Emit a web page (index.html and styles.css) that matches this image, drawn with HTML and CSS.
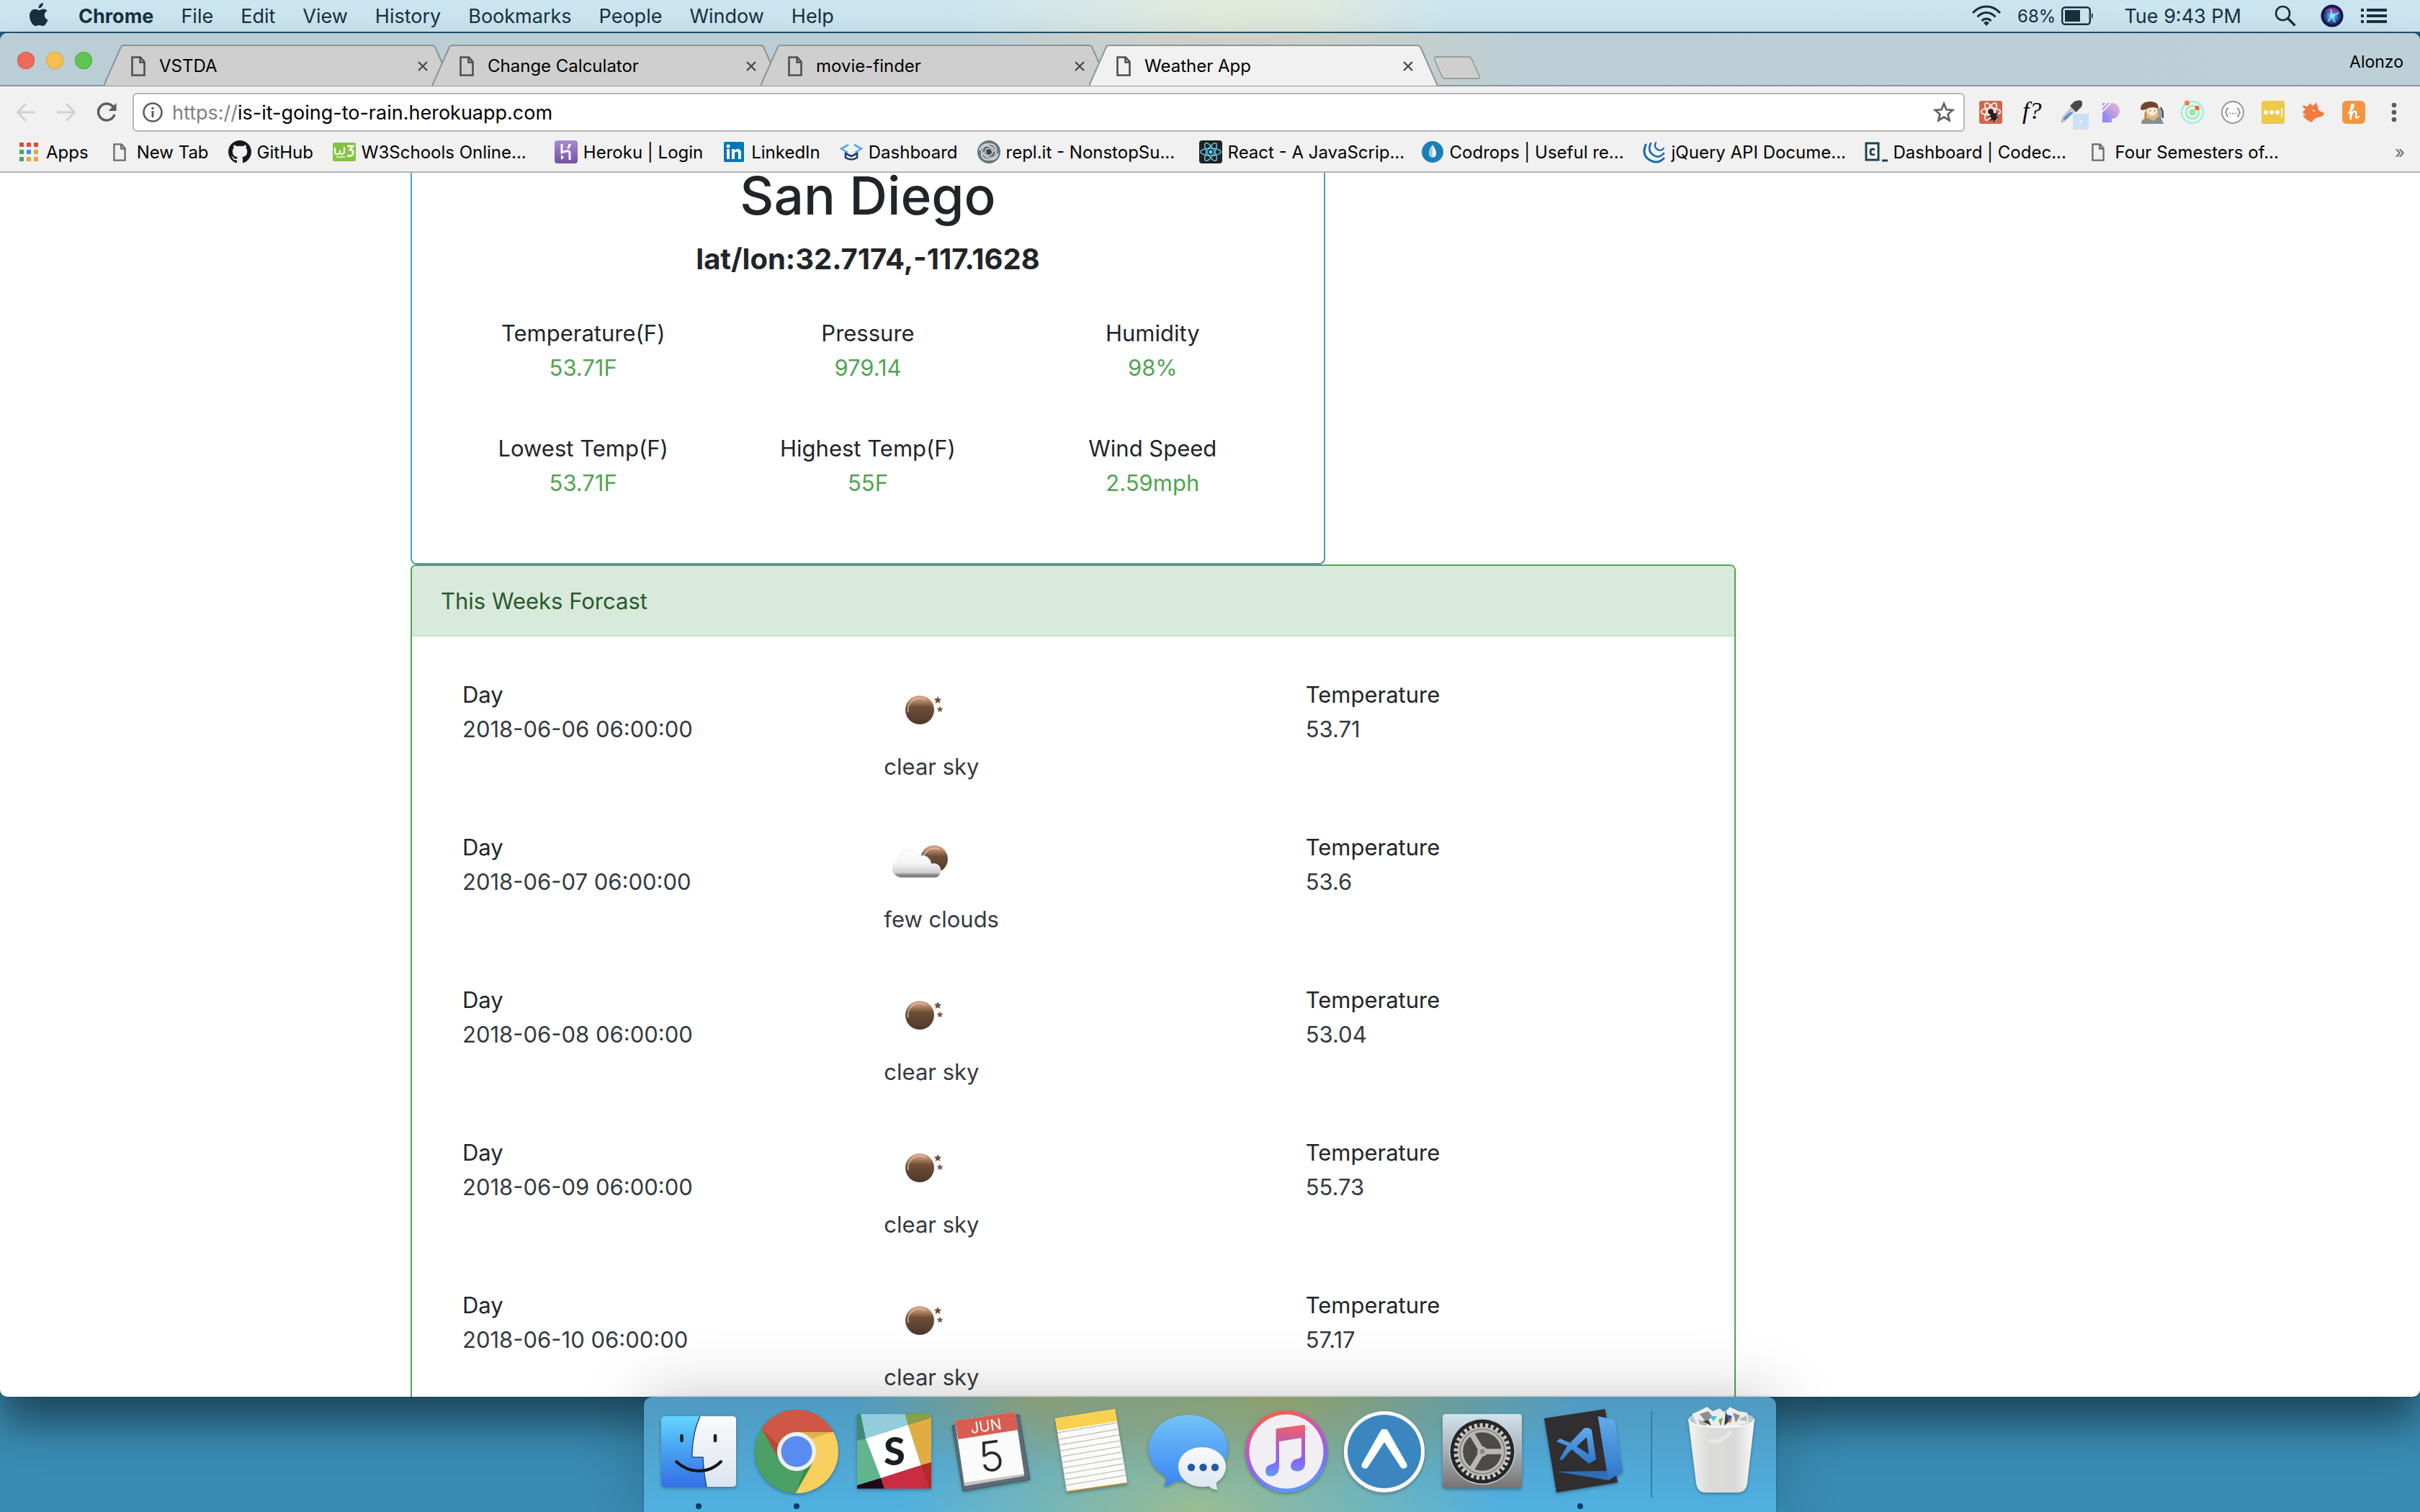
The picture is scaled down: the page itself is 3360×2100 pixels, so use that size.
FILE: index.html
```html
<!DOCTYPE html>
<html lang="en">
<head>
<meta charset="utf-8">
<title>Weather App</title>
<link rel="stylesheet" href="styles.css">
</head>
<body>
<svg class="defs" width="0" height="0" aria-hidden="true">
  <defs>
    <symbol id="page" viewBox="0 0 20 28"><path d="M1.5 1.500H13L18.500 8V26.500H1.500Z M12.500 1.500V8.500H18.500" fill="none" stroke="currentColor" stroke-width="2.600"/></symbol>
    <symbol id="close" viewBox="0 0 14 14"><path d="M1 1L13 13M13 1L1 13" stroke="#4a4a4a" stroke-width="2.400"/></symbol>
    <symbol id="tab-shape" viewBox="0 0 484 58"><path d="M0 57L24 3Q25.500 1 28 1H456Q458.500 1 460 3L484 57Z" fill="currentColor"/><path d="M0 57L24 3Q25.500 1 28 1H456Q458.500 1 460 3L484 57" fill="none" stroke="#8a9599" stroke-width="2"/></symbol>
    <linearGradient id="moon" x1="0" y1="0" x2="0" y2="1"><stop offset="0" stop-color="#dba888"/><stop offset=".18" stop-color="#b98767"/><stop offset=".4" stop-color="#6e4e38"/><stop offset="1" stop-color="#4d382b"/></linearGradient>
    <linearGradient id="cloud" x1="0" y1="0" x2="0" y2="1"><stop offset="0" stop-color="#fff"/><stop offset=".5" stop-color="#f4f4f4"/><stop offset=".82" stop-color="#cfcfcf"/><stop offset=".9" stop-color="#888"/><stop offset="1" stop-color="#777"/></linearGradient>
    <symbol id="clear" viewBox="0 0 100 100"><circle cx="50" cy="45" r="20" fill="url(#moon)"/><path d="M34 48A16 16 0 0 1 58 31" fill="none" stroke="#e3c4b0" stroke-width="1.800" opacity=".8"/><path d="M75 26l1.500 3.500 3.800.3-2.900 2.500.9 3.700-3.300-2-3.300 2 .9-3.700-2.900-2.500 3.800-.3Z" fill="#6b4a38"/><path d="M78 39.500l1.300 3 3.300.3-2.500 2.100.8 3.200-2.900-1.700-2.900 1.700.8-3.200-2.500-2.100 3.300-.3Z" fill="#7b5a48"/></symbol>
    <symbol id="few" viewBox="0 0 100 100"><circle cx="70" cy="40" r="19" fill="url(#moon)"/><path d="M55 38A16 16 0 0 1 78 27" fill="none" stroke="#e3c4b0" stroke-width="1.800" opacity=".8"/><path d="M24 66C16 65 11 58 12 52C13 45 17 43 21 42C21 33 27 27 35 27C41 27 46 30 48 36C57 33 65 38 66 47C73 45 79 49 79 56C79 61 77 65 72 66Z" fill="url(#cloud)" stroke="#e4e4e4" stroke-width=".8"/></symbol>
    <linearGradient id="finderBlue" x1="0" y1="0" x2="0" y2="1"><stop offset="0" stop-color="#63d5fb"/><stop offset=".5" stop-color="#489ff0"/><stop offset="1" stop-color="#3470ea"/></linearGradient>
    <linearGradient id="paper" x1="0" y1="0" x2="0" y2="1"><stop offset="0" stop-color="#fafafa"/><stop offset="1" stop-color="#dbe5f0"/></linearGradient>
    <linearGradient id="bubble" x1="0" y1="0" x2="0" y2="1"><stop offset="0" stop-color="#73c3f7"/><stop offset="1" stop-color="#3a86f6"/></linearGradient>
    <linearGradient id="ring" x1=".4" y1="0" x2=".7" y2="1"><stop offset="0" stop-color="#f5604c"/><stop offset=".35" stop-color="#c953c0"/><stop offset=".6" stop-color="#8f62f5"/><stop offset="1" stop-color="#52a0ff"/></linearGradient>
    <linearGradient id="note" x1="0" y1="0" x2="0" y2="1"><stop offset="0" stop-color="#f8605c"/><stop offset=".4" stop-color="#b05cc4"/><stop offset=".7" stop-color="#8a62f8"/><stop offset="1" stop-color="#5a9ff8"/></linearGradient>
    <linearGradient id="metal" x1="0" y1="0" x2="0" y2="1"><stop offset="0" stop-color="#d3e3ec"/><stop offset=".5" stop-color="#a9b0b4"/><stop offset="1" stop-color="#757372"/></linearGradient>
    <linearGradient id="codeBlue" x1="0" y1="0" x2="0" y2="1"><stop offset="0" stop-color="#62abea"/><stop offset="1" stop-color="#2e76c8"/></linearGradient>
    <linearGradient id="bin" x1="0" y1="0" x2="1" y2="0"><stop offset="0" stop-color="#f4f4f4"/><stop offset=".3" stop-color="#dcdcda"/><stop offset=".7" stop-color="#d8d8d8"/><stop offset="1" stop-color="#fafafa"/></linearGradient>
    <linearGradient id="pgrad" x1="1" y1="0" x2="0" y2="1"><stop offset="0" stop-color="#f3b5d5"/><stop offset="1" stop-color="#7b83fa"/></linearGradient>
    <linearGradient id="heroku" x1="0" y1="0" x2="0" y2="1"><stop offset="0" stop-color="#a98bd0"/><stop offset="1" stop-color="#75539f"/></linearGradient>
    <radialGradient id="siri"><stop offset="0" stop-color="#d8ffff"/><stop offset=".35" stop-color="#3fa6d8"/><stop offset=".7" stop-color="#2c4ba8"/><stop offset="1" stop-color="#10143a"/></radialGradient>
  </defs>
</svg>

<header class="menubar">
  <button class="apple" aria-label="Apple menu"><svg width="28" height="34" viewBox="0 0 28 34"><path d="M20 1C20 5 17 8.500 13.500 8.500C13 5 16.500 1.300 20 1ZM25.500 12C22.500 14 21.500 16 21.800 18.800C22 21.600 23.600 23.500 26.500 24.700C25.500 27.500 22.500 33 19.500 33C17.500 33 16.800 31.900 14.300 31.900C11.800 31.900 11 33 9.200 33C5.500 33 1 25.500 1 19C1 13 4.800 9.700 8.700 9.700C11.200 9.700 12.700 11.200 14.500 11.200C16.200 11.200 18 9.600 20.600 9.600C22.600 9.600 24.500 10.700 25.500 12Z" fill="#17313f"/></svg></button>
  <nav class="menus" aria-label="Menu bar">
    <button class="app">Chrome</button><button>File</button><button>Edit</button><button>View</button><button>History</button><button>Bookmarks</button><button>People</button><button>Window</button><button>Help</button>
  </nav>
  <div class="status">
    <svg class="wifi" width="42" height="30" viewBox="0 0 42 30" fill="none" stroke="#17313f" stroke-width="3"><path d="M2 11C13-1 29-1 40 11M8.500 16.500C16 8.500 26 8.500 33.500 16.500M14.500 22C18.500 18 23.500 18 27.500 22"/><path d="M21 29l-4-4.500q4-3.500 8 0Z" fill="#17313f" stroke="none"/></svg>
    <span class="percent">68%</span>
    <svg class="battery" width="46" height="26" viewBox="0 0 46 26"><rect x="1.200" y="1.200" width="38.600" height="23.600" rx="4" fill="none" stroke="#17313f" stroke-width="2.400"/><rect x="5" y="5" width="21" height="16" fill="#17313f"/><path d="M42 8.500q4 4.500 0 9Z" fill="#17313f"/></svg>
    <time class="clock">Tue 9:43 PM</time>
    <button aria-label="Search"><svg width="30" height="30" viewBox="0 0 30 30" fill="none" stroke="#17313f" stroke-width="2.600"><circle cx="11.500" cy="11.500" r="9.500"/><path d="M18.500 18.500L28.500 28.500" stroke-width="3.200"/></svg></button>
    <button class="siri" aria-label="Siri"><svg width="32" height="32" viewBox="0 0 32 32"><circle cx="16" cy="16" r="15.500" fill="#11163a"/><circle cx="16" cy="16" r="13.500" fill="url(#siri)"/><path d="M6 9C13 2 24 5 27 12C20 11 13 13 6 9Z" fill="#a03fa8" opacity=".8"/><path d="M16 16L14 7M16 16L25 12M16 16L20 25M16 16L10 24" stroke="#9fe6f4" stroke-width="1.600"/></svg></button>
    <button aria-label="Notifications"><svg width="36" height="22" viewBox="0 0 36 22" fill="#17313f"><path d="M0 1h4v4H0zM8 1h28v4H8zM0 9h4v4H0zM8 9h28v4H8zM0 17h4v4H0zM8 17h28v4H8z"/></svg></button>
  </div>
</header>

<main class="window">
  <div class="tabstrip">
    <div class="lights"><button class="red" aria-label="Close"></button><button class="amber" aria-label="Minimise"></button><button class="green" aria-label="Zoom"></button></div>
    <div class="tabs">
      <div class="tab"><svg class="shape"><use href="#tab-shape"/></svg><div class="tab-body"><svg class="doc"><use href="#page"/></svg><span class="tab-title">VSTDA</span><button aria-label="Close tab"><svg class="x"><use href="#close"/></svg></button></div></div>
      <div class="tab"><svg class="shape"><use href="#tab-shape"/></svg><div class="tab-body"><svg class="doc"><use href="#page"/></svg><span class="tab-title">Change Calculator</span><button aria-label="Close tab"><svg class="x"><use href="#close"/></svg></button></div></div>
      <div class="tab"><svg class="shape"><use href="#tab-shape"/></svg><div class="tab-body"><svg class="doc"><use href="#page"/></svg><span class="tab-title">movie-finder</span><button aria-label="Close tab"><svg class="x"><use href="#close"/></svg></button></div></div>
      <div class="tab active"><svg class="shape"><use href="#tab-shape"/></svg><div class="tab-body"><svg class="doc"><use href="#page"/></svg><span class="tab-title">Weather App</span><button aria-label="Close tab"><svg class="x"><use href="#close"/></svg></button></div></div>
      <button class="newtab" aria-label="New tab"><svg width="66" height="32" viewBox="0 0 66 32"><path d="M4 1H50Q52 1 53 3L64 28Q65 31 62 31H16Q13.500 31 12.500 29L1.500 4Q.8 1 4 1Z" fill="#cfcfcf" stroke="#97a0a0" stroke-width="1.800"/></svg></button>
    </div>
    <button class="profile">Alonzo</button>
  </div>

  <div class="toolbar">
    <button aria-label="Back"><svg width="28" height="28" viewBox="0 0 28 28" fill="none" stroke="#d2d2d2" stroke-width="3"><path d="M27 14H3M14 2L2.500 14L14 26"/></svg></button>
    <button aria-label="Forward"><svg width="28" height="28" viewBox="0 0 28 28" fill="none" stroke="#d2d2d2" stroke-width="3"><path d="M1 14H25M14 2L25.500 14L14 26"/></svg></button>
    <button aria-label="Reload"><svg width="28" height="28" viewBox="0 0 28 28"><path d="M23.500 7A11.500 11.500 0 1 0 25 17" fill="none" stroke="#5c5c5c" stroke-width="3.400"/><path d="M27.500 1V12H16.500Z" fill="#5c5c5c"/></svg></button>
    <div class="omnibox">
      <svg width="28" height="28" viewBox="0 0 28 28"><circle cx="14" cy="14" r="12.500" fill="none" stroke="#5c5c5c" stroke-width="2.600"/><path d="M12.500 7h3v3h-3zM12.500 12h3v9h-3z" fill="#5c5c5c"/></svg>
      <label for="url">https://</label>
      <input id="url" type="text" value="is-it-going-to-rain.herokuapp.com">
      <button aria-label="Bookmark"><svg width="30" height="30" viewBox="0 0 30 30"><path d="M15 3l3.400 8.200 8.800.7-6.700 5.700 2.100 8.600L15 21.600l-7.600 4.600 2.100-8.600-6.700-5.700 8.800-.7Z" fill="none" stroke="#5c5c5c" stroke-width="2.600"/></svg></button>
    </div>
    <div class="extensions">
      <button aria-label="React tools"><svg viewBox="0 0 40 40"><rect x="4" y="4" width="32" height="32" rx="3" fill="#d3664f"/><g fill="none" stroke="#fff" stroke-width="1.600"><ellipse cx="20" cy="19" rx="13.500" ry="5"/><ellipse cx="20" cy="19" rx="13.500" ry="5" transform="rotate(60 20 19)"/><ellipse cx="20" cy="19" rx="13.500" ry="5" transform="rotate(120 20 19)"/></g><g fill="#222" stroke="#222" stroke-width="1.600"><circle cx="20" cy="19" r="2.800"/><ellipse cx="24" cy="26" rx="3.500" ry="5" transform="rotate(-25 24 26)"/><path d="M17 26l12-5M18 31l12-4M24 33l5-11"/></g></svg></button>
      <button aria-label="WhatFont"><svg viewBox="0 0 40 40"><text x="8" y="29" font-family="Liberation Serif, serif" font-style="italic" font-size="34" fill="#000">f?</text></svg></button>
      <button aria-label="Colour picker"><svg viewBox="0 0 40 40"><path d="M6 34L8 27L22 11L27 16L12 31Z" fill="#c6ccd2" stroke="#9ba1a6"/><path d="M9 31L10 27L18 20L22 20L12 30Z" fill="#4c8bd8"/><path d="M20 9L24 5Q34 1 35 6Q36 12 30 16L27 20L18 11Z" fill="#4a4a4a"/><rect x="22" y="22" width="22" height="22" rx="2" fill="#cddff6"/><circle cx="33" cy="33" r="1.600" fill="#fff"/></svg></button>
      <button aria-label="Palette"><svg viewBox="0 0 40 40"><path d="M7 7H20A11 11 0 0 1 20 29V34H7Z" fill="url(#pgrad)"/><path d="M6 14L14 6M6 20L20 6" stroke="#f1f1f1" stroke-width="1.800"/></svg></button>
      <button aria-label="User"><svg viewBox="0 0 40 40"><path d="M9 36L10 18L20 8L30 17L27 36Z" fill="#e2b878"/><circle cx="20" cy="18" r="7" fill="#fbe6d2"/><path d="M4 16Q4 5 18 5Q29 5 29 15Q20 11 13 15Q8 18 4 16Z" fill="#70452f"/><path d="M5 36Q5 28 14 28L22 32L31 24L36 36Z" fill="#7e9297"/><path d="M28 13L33 15L35 27L29 26Z" fill="#8ea5ad"/><path d="M32 13l3 6v9" stroke="#222" stroke-width="1.600" fill="none"/><path d="M17 18h1M23 18h1" stroke="#333" stroke-width="1.600"/><path d="M11 20Q10 30 13 36" stroke="#b8854a" stroke-width="2.500" fill="none"/></svg></button>
      <button aria-label="Orbit"><svg viewBox="0 0 40 40"><g fill="none" stroke-width="2.200"><circle cx="20" cy="20" r="15" stroke="#8ff3dd"/><circle cx="20" cy="20" r="9" stroke="#8eedb4"/></g><circle cx="20" cy="20" r="4.500" fill="#8deea0"/><circle cx="12.500" cy="7" r="3.500" fill="#ee8240"/><circle cx="26.500" cy="14" r="3.200" fill="#f06638"/></svg></button>
      <button aria-label="JSON"><svg viewBox="0 0 40 40"><circle cx="20" cy="20" r="15" fill="#fff" stroke="#909090" stroke-width="1.800"/><path d="M14 14.500q-2.500 0-2.500 2.500t-2 3q2 .5 2 3t2.500 2.500M26 14.500q2.500 0 2.500 2.500t2 3q-2 .5-2 3t-2.500 2.500" fill="none" stroke="#777" stroke-width="1.400"/><path d="M15.500 21.500h2M19 21.500h2M22.500 21.500h2" stroke="#777" stroke-width="1.600"/></svg></button>
      <button aria-label="Passwords"><svg viewBox="0 0 40 40"><rect x="4" y="4" width="32" height="32" rx="3" fill="#ecca45"/><circle cx="10" cy="20" r="3" fill="#fff"/><circle cx="18" cy="20" r="3" fill="#fff"/><circle cx="26" cy="20" r="3" fill="#fff"/><path d="M32 14v12" stroke="#fff" stroke-width="1.800"/></svg></button>
      <button aria-label="Metamask"><svg viewBox="0 0 40 40"><path d="M5 10Q8 11 12 12L15 7L19 11Q22 9 24 6L26 12L27 17L35 21Q34 26 27 27Q20 28 18 34Q8 30 5 24Q8 25 9 23Q4 22 6 18Q8 18 9 15Q5 14 5 10Z" fill="#f47a42"/><path d="M18 16l5 2-3 1Z" fill="#fff"/></svg></button>
      <button aria-label="Honey"><svg viewBox="0 0 40 40"><rect x="4" y="4" width="32" height="32" rx="6" fill="#f59543"/><path d="M13 21Q21 13 19.500 9.500Q17 7 16 16L15.500 30Q17 19 21 18.500Q24.500 18.500 23 24Q22 30 27 26" fill="none" stroke="#fff" stroke-width="2.400" stroke-linecap="round"/></svg></button>
    </div>
    <button class="more" aria-label="Menu"><svg width="8" height="28" viewBox="0 0 8 28" fill="#5c5c5c"><circle cx="4" cy="4" r="3.300"/><circle cx="4" cy="14" r="3.300"/><circle cx="4" cy="24" r="3.300"/></svg></button>
  </div>

  <nav class="bookmarks" aria-label="Bookmarks">
    <a href="#"><svg viewBox="0 0 32 32"><path d="M3 3h6v6H3zM13 3h6v6h-6zM23 3h6v6h-6z" fill="#e24b3f"/><path d="M3 13h6v6H3zM3 23h6v6H3z" fill="#4fa25c"/><path d="M13 13h6v6h-6z" fill="#4a8af4"/><path d="M23 13h6v6h-6zM13 23h6v6h-6zM23 23h6v6h-6z" fill="#e8a53a"/></svg><span>Apps</span></a>
    <a href="#"><svg><use href="#page" x="7" y="4" width="18" height="25"/></svg><span>New Tab</span></a>
    <a href="#"><svg viewBox="0 0 16 16"><path fill="#15171a" d="M8 0C3.580 0 0 3.580 0 8c0 3.540 2.290 6.530 5.470 7.590.4.070.55-.17.55-.38 0-.19-.01-.82-.01-1.490-2.010.37-2.530-.49-2.690-.94-.09-.23-.48-.94-.82-1.130-.28-.15-.68-.52-.01-.53.63-.01 1.080.58 1.230.82.720 1.210 1.870.87 2.330.66.070-.52.280-.87.510-1.070-1.780-.2-3.640-.89-3.640-3.950 0-.87.310-1.590.82-2.150-.08-.2-.36-1.020.080-2.120 0 0 .67-.21 2.200.82.640-.18 1.320-.27 2-.27s1.360.09 2 .27c1.530-1.040 2.200-.82 2.200-.82.440 1.100.16 1.920.080 2.120.51.560.82 1.270.82 2.150 0 3.070-1.870 3.750-3.650 3.950.29.250.54.730.54 1.480 0 1.070-.01 1.930-.01 2.200 0 .21.150.46.550.38A8.010 8.010 0 0 0 16 8c0-4.420-3.580-8-8-8z"/></svg><span>GitHub</span></a>
    <a href="#" class="clipped"><svg viewBox="0 0 32 32"><rect y="3" width="32" height="26" rx="2" fill="#84c441"/><path d="M3 10v6q0 4 4 3t3-5v4q3 3 6-1V9" fill="none" stroke="#fff" stroke-width="2"/><path d="M20 8h8l-4 5q5 0 4 5t-8 3" fill="none" stroke="#fff" stroke-width="2.600"/><path d="M5 23h12" stroke="#d7ecc0" stroke-width="2"/></svg><span>W3Schools Online...</span></a>
    <a href="#"><svg viewBox="0 0 32 32"><rect width="32" height="32" rx="4" fill="url(#heroku)"/><path d="M10 5V17Q21 12 21 18V27M21 5Q21 9 18 11" fill="none" stroke="#fff" stroke-width="3"/><path d="M9 20L13 23.500L9 27Z" fill="#fff"/></svg><span>Heroku | Login</span></a>
    <a href="#"><svg viewBox="0 0 32 32"><rect x="2" y="2" width="28" height="28" rx="2" fill="#0077b5"/><path d="M6 12h4v14H6zM13 12h4v2q5-5 9 1v11h-4v-9q-2-3-5 0v9h-4z" fill="#fff"/><circle cx="8" cy="8" r="2.500" fill="#fff"/></svg><span>LinkedIn</span></a>
    <a href="#"><svg viewBox="0 0 32 32" fill="none" stroke-width="2.600"><path d="M12 6L2 11.500L11 17M20 6L30 11.500L21 17" stroke="#5aa7e0"/><path d="M8 18V24Q16 29 24 24V18L16 22Z" stroke="#22386b"/></svg><span>Dashboard</span></a>
    <a href="#" class="clipped"><svg viewBox="0 0 32 32"><circle cx="16" cy="16" r="16" fill="#66767c"/><g fill="none" stroke="#d4dadc" stroke-width="2"><path d="M3 14Q5 5 16 5T26 16T16 24T9 16"/><path d="M29 18Q27 27 16 27T6 16T16 8T23 16"/></g><circle cx="16" cy="16" r="5.500" fill="#ddd"/><circle cx="16" cy="16" r="4" fill="#444"/></svg><span>repl.it - NonstopSu...</span></a>
    <a href="#" class="clipped"><svg viewBox="0 0 32 32"><rect width="32" height="32" rx="4" fill="#222"/><g fill="none" stroke="#61dafb" stroke-width="1.400"><ellipse cx="16" cy="16" rx="14" ry="5"/><ellipse cx="16" cy="16" rx="14" ry="5" transform="rotate(60 16 16)"/><ellipse cx="16" cy="16" rx="14" ry="5" transform="rotate(120 16 16)"/></g><circle cx="16" cy="16" r="2.500" fill="#61dafb"/></svg><span>React - A JavaScrip...</span></a>
    <a href="#" class="clipped"><svg viewBox="0 0 32 32"><circle cx="16" cy="16" r="15" fill="#1a7fb4"/><path d="M16 6Q22 15 21 19Q20 23.500 16 23.500T11 19Q10 15 16 6Z" fill="#fff"/><path d="M16 8V23Q11 23 11 19Q11 14 16 8Z" fill="#9cc9e2"/></svg><span>Codrops | Useful re...</span></a>
    <a href="#" class="clipped"><svg viewBox="0 0 32 32" fill="none" stroke="#1b69a9" stroke-linecap="round"><path d="M4 6Q-2 20 9 27T29 25" stroke-width="3"/><path d="M11 4Q6 14 14 20T29 18" stroke-width="2.600"/><path d="M18 3Q15 9 20 12.500T29 11" stroke-width="2.200"/></svg><span>jQuery API Docume...</span></a>
    <a href="#" class="clipped"><svg viewBox="0 0 32 32"><path d="M2 4H19V27H2Z" fill="#fff" stroke="#204056" stroke-width="3"/><path d="M14 13q-6-3-6 3t6 3M24 28h8" fill="none" stroke="#204056" stroke-width="3"/></svg><span>Dashboard | Codec...</span></a>
    <a href="#" class="clipped"><svg><use href="#page" x="7" y="4" width="18" height="25"/></svg><span>Four Semesters of...</span></a>
    <button class="overflow" aria-label="More bookmarks">»</button>
  </nav>

  <div class="viewport">
    <div class="container">
      <section class="card current">
        <h1>San Diego</h1>
        <h4>lat/lon:32.7174,-117.1628</h4>
        <div class="row"><dl><dt>Temperature(F)</dt><dd>53.71F</dd></dl><dl><dt>Pressure</dt><dd>979.14</dd></dl><dl><dt>Humidity</dt><dd>98%</dd></dl></div>
        <div class="row"><dl><dt>Lowest Temp(F)</dt><dd>53.71F</dd></dl><dl><dt>Highest Temp(F)</dt><dd>55F</dd></dl><dl><dt>Wind Speed</dt><dd>2.59mph</dd></dl></div>
      </section>
      <section class="card forecast">
        <h2>This Weeks Forcast</h2>
        <div class="days">
          <div class="row"><dl><dt>Day</dt><dd>2018-06-06 06:00:00</dd></dl><figure><svg><use href="#clear"/></svg><figcaption>clear sky</figcaption></figure><dl><dt>Temperature</dt><dd>53.71</dd></dl></div>
          <div class="row"><dl><dt>Day</dt><dd>2018-06-07 06:00:00</dd></dl><figure><svg><use href="#few"/></svg><figcaption>few clouds</figcaption></figure><dl><dt>Temperature</dt><dd>53.6</dd></dl></div>
          <div class="row"><dl><dt>Day</dt><dd>2018-06-08 06:00:00</dd></dl><figure><svg><use href="#clear"/></svg><figcaption>clear sky</figcaption></figure><dl><dt>Temperature</dt><dd>53.04</dd></dl></div>
          <div class="row"><dl><dt>Day</dt><dd>2018-06-09 06:00:00</dd></dl><figure><svg><use href="#clear"/></svg><figcaption>clear sky</figcaption></figure><dl><dt>Temperature</dt><dd>55.73</dd></dl></div>
          <div class="row"><dl><dt>Day</dt><dd>2018-06-10 06:00:00</dd></dl><figure><svg><use href="#clear"/></svg><figcaption>clear sky</figcaption></figure><dl><dt>Temperature</dt><dd>57.17</dd></dl></div>
        </div>
      </section>
    </div>
  </div>
</main>

<footer class="dock">
  <button class="running" aria-label="Finder"><svg viewBox="0 0 136 144"><rect x="16" y="27" width="104" height="98" rx="5" fill="url(#finderBlue)"/><path d="M70 27H115Q120 27 120 32V120Q120 125 115 125H79Q75 106 74 84H61Q58 84 59 78Q60 48 70 27Z" fill="url(#paper)"/><path d="M70 27Q60 48 59 78Q58 84 61 84H74Q75 106 79 125" fill="none" stroke="#2a4a80" stroke-width="1.500"/><path d="M44.500 54V61M91 54V61" stroke="#142030" stroke-width="4.500" stroke-linecap="round"/><path d="M37 90Q51 103 68 103Q86 103 99 90" fill="none" stroke="#141414" stroke-width="4" stroke-linecap="round"/></svg></button>
  <button class="running" aria-label="Chrome"><svg viewBox="0 0 136 144"><circle cx="68" cy="76" r="58" fill="#4aa065"/><path d="M68 49H119.300A58 58 0 0 1 66.500 134L91.400 89.500Z" fill="#f8cf5f"/><path d="M19.500 44A58 58 0 0 1 119.300 49H68A27 27 0 0 0 43 86Z" fill="#d05646"/><path d="M68 49H118L89 58Z" fill="#d9a544" opacity=".7"/><path d="M19.500 44L43 86L42 66Z" fill="#a8402f" opacity=".6"/><path d="M66.500 134L90 93L78 102Z" fill="#2f7c4a" opacity=".6"/><circle cx="68" cy="76" r="27" fill="#f0f0f0"/><circle cx="68" cy="76" r="21.500" fill="#5a8bee"/></svg></button>
  <button aria-label="Slack"><svg viewBox="0 0 136 144"><path d="M16 24H21L28 58L16 61Z" fill="#3f8a72"/><path d="M21 24H82.500L87 39L28 58Z" fill="#93cddb"/><path d="M82.500 24H119V29L87 39Z" fill="#87a045"/><path d="M16 61L28 58L49 113L16 123Z" fill="#62b48f"/><path d="M28 58L87 39L105 95L49 113Z" fill="#fff"/><path d="M87 39L119 29V91L105 95Z" fill="#e2ad40"/><path d="M16 123L49 113L54 127.500H16Z" fill="#1f0817"/><path d="M49 113L105 95L116 127.500H54Z" fill="#cc2c41"/><path d="M105 95L119 91V127.500H116Z" fill="#b52a22"/><text x="68" y="95" text-anchor="middle" font-family="Lato, sans-serif" font-weight="900" font-size="54" fill="#1b1d24">S</text></svg></button>
  <button aria-label="Calendar"><svg viewBox="0 0 136 144"><path d="M12 40L105 25L120 115L27 131Z" fill="#5c6b78" stroke="#4a5560"/><path d="M16 33L99 21L112 110L29 124Z" fill="#c9c7c0"/><path d="M16 33L99 21L112 107L29 119Z" fill="#fbfbfb"/><path d="M16 33L99 21L103 46L20.500 59Z" fill="#d85c50"/><text x="60" y="48" transform="rotate(-8 60 48)" text-anchor="middle" font-family="Inter, sans-serif" font-size="21" fill="#fff">JUN</text><text x="69" y="103" transform="rotate(-8 69 103)" text-anchor="middle" font-family="Inter, sans-serif" font-weight="300" font-size="58" fill="#2a2a2a">5</text></svg></button>
  <button aria-label="Notes"><svg viewBox="0 0 136 144"><path d="M19 30L102 17L119 121L35 133Z" fill="#b08c32"/><path d="M19 30L102 17L119 119L35 131Z" fill="#fbfbf9"/><path d="M19 30L102 17L105 34L22 47Z" fill="#f8d24c"/><path d="M22 50L105 36" stroke="#999" stroke-width="1.500" stroke-dasharray="2 1.500"/><path d="M24 59L106 45M25 67L108 53M26 75L109 61M28 83L110 69M29 91L111 77M30 99L113 85M31 107L114 93M33 115L116 101M34 123L117 109" stroke="#c4c4c4" stroke-width="1.300"/></svg></button>
  <button aria-label="Messages"><svg viewBox="0 0 136 144"><path d="M68 25C98 25 123 46 123 72S98 118 68 118C62 118 56 117.500 51 116C46 121 40 124 33 124C37 120 38 115 36 110C21 102 13 88 13 72C13 46 38 25 68 25Z" fill="url(#bubble)"/><path d="M87 70C105 70 120 82 120 97C120 106 115 114 107 119C107 123 107 126 109 129C103 129 99 127 96 124C93 125 90 125 87 125C69 125 54 113 54 97S69 70 87 70Z" fill="url(#paper)"/><g fill="#2558a5"><circle cx="72" cy="98" r="5.200"/><circle cx="88.500" cy="98" r="5.200"/><circle cx="105" cy="98" r="5.200"/></g></svg></button>
  <button aria-label="iTunes"><svg viewBox="0 0 136 144"><circle cx="68" cy="76" r="57" fill="url(#ring)"/><circle cx="68" cy="76" r="51.500" fill="#f1eff4"/><path d="M53.500 46Q53.500 44.500 55 44L92 39Q94 39 94 41V92Q94 103 83 103.500Q74 103 74 96Q75 87 84 86Q89 85 89 81V57L58 62V97Q58 109 48 110.500Q39 111 39 103Q39 95 48 93.500Q53.500 92 53.500 88Z" fill="url(#note)"/></svg></button>
  <button aria-label="Launcher"><svg viewBox="0 0 136 144"><circle cx="68" cy="77" r="56" fill="#d9d9d9"/><circle cx="68" cy="76" r="56" fill="#fafafa"/><circle cx="68" cy="76" r="51" fill="#3b86c1"/><path d="M63 47Q64 45 66 45H70Q72 45 73 47L99 93Q101 97 97 99Q93 101 91 98L68 63L45 98Q43 101 39 99Q35 97 37 93Z" fill="#fff"/></svg></button>
  <button aria-label="System Preferences"><svg viewBox="0 0 136 144"><rect x="13" y="24" width="110" height="103" rx="4" fill="url(#metal)"/><circle cx="68" cy="76" r="46" fill="#b9cfe6"/><circle cx="68" cy="76" r="44.500" fill="#262626"/><circle cx="68" cy="76" r="36.500" fill="none" stroke="#c8c6c2" stroke-width="6" stroke-dasharray="4.300 3.344"/><circle cx="68" cy="76" r="30.500" fill="#4d4b49" stroke="#bab8b4" stroke-width="7.500"/><circle cx="68" cy="76" r="31" fill="none" stroke="#75736f" stroke-width="1.200"/><path d="M68 76H97M68 76L53 51M68 76L53 101" stroke="#bab8b4" stroke-width="7.500"/><circle cx="68" cy="76" r="7" fill="#bab8b4"/><circle cx="68" cy="76" r="3.500" fill="#8c8a88"/></svg></button>
  <button class="running" aria-label="Visual Studio Code"><svg viewBox="0 0 136 144"><path d="M18 30L102.500 17L120 119L35 133Z" fill="#302e30"/><path d="M36 104L104 103L127 104L107 116Z" fill="#2d6db4"/><path d="M92.600 27L116 32L127 104L107 116Z" fill="url(#codeBlue)"/><path fill-rule="evenodd" d="M73 44Q79 41 84 46L90 87L80 93L56 73L43 88L39 87L50 68L35 62L40 58L54 64ZM77 56L63 69L80 80Z" fill="url(#codeBlue)"/></svg></button>
  <hr>
  <button aria-label="Trash"><svg viewBox="0 0 136 144"><ellipse cx="68" cy="31" rx="45.500" ry="11" fill="#b8cbd6"/><path d="M27 24L40 18L48 14L56 20L66 16L72 22L80 14L92 20L104 22L106 36L84 42L50 42L34 38Z" fill="#ececec"/><path d="M38 24l12-4 6 8-10 6ZM84 22l10 4-6 10Z" fill="#8d8d8d"/><path d="M36 32l14 3-4 6-8-3ZM92 32l10-6 2 8Z" fill="#b5b5b5"/><path d="M42 34l8-2 4 8ZM74 20l5 14-7 6Z" fill="#3b3b3b"/><path d="M52 27l10 0-5 7Z" fill="#40bfe0"/><path d="M74 24l9 3-4 8Z" fill="#3457a8"/><path d="M64 32l6-3-3 12Z" fill="#6ea843"/><path d="M77 32l6-2-3 7Z" fill="#d8703a"/><path d="M22 31Q24 42 68 42T114 31L104 120Q102 133 90 133H46Q35 133 33 120Z" fill="url(#bin)"/><path d="M22 31Q24 42 68 42T114 31" fill="none" stroke="#fff" stroke-width="1.600"/><path d="M50 60Q64 68 82 48" fill="none" stroke="#ececec" stroke-width="5" opacity=".7"/></svg></button>
</footer>
</body>
</html>
```

FILE: styles.css
```css
* { box-sizing: border-box; }

body {
  margin: 0;
  height: 100vh;
  display: flex;
  flex-direction: column;
  overflow: hidden;
  background: linear-gradient(#215f7f, #215f7f) top / 100% 80px no-repeat, #398cb4;
  color: #000;
  font-family: Inter, "Liberation Sans", sans-serif;
}

svg { display: block; flex: none; }
h1, h2, h4, dl, dd, figure { margin: 0; }

button {
  margin: 0;
  padding: 0;
  border: 0;
  background: none;
  color: inherit;
  font: inherit;
}

/* Menu bar */
.menubar {
  flex: none;
  height: 44px;
  margin-bottom: 2px;
  padding: 0 46px 0 40px;
  display: flex;
  align-items: center;
  background: linear-gradient(90deg, #cbe5f1 0 39%, #d6e8e6 45%, #e2e9dd 50%, #e0e9dd 54%, #cbe5f0 60%, #cbe5f1);
  color: #17313f;
  font-size: 27px;
}
.apple { margin: -4px 41px 0 0; }
.menus { display: flex; gap: 38px; }
.menus .app { font-weight: 700; }
.status {
  margin-left: auto;
  display: flex;
  align-items: center;
}
.wifi { margin-right: 22px; }
.percent { margin-right: 8px; font-size: 24px; }
.battery { margin-right: 41px; }
.clock { margin-right: 46px; }
.siri { margin: 0 24px 0 34px; }

/* Browser window */
.window {
  flex: 1;
  min-height: 0;
  display: flex;
  flex-direction: column;
  overflow: hidden;
  border-radius: 10px;
  background: #fff;
  box-shadow: 0 0 2px rgba(0, 0, 0, .7), 0 36px 60px rgba(0, 0, 0, .5);
}
.tabstrip {
  flex: none;
  height: 74px;
  padding: 0 23px 0 24px;
  display: flex;
  justify-content: space-between;
  background: linear-gradient(#8a9599, #8a9599) bottom / 100% 2px no-repeat,
    linear-gradient(90deg, #bbced5 0 40%, #c8d0cb 45%, #ced2c9 51%, #c7d0cb 57%, #bbced5 63%, #bed0d7);
}
.lights {
  display: flex;
  gap: 16px;
  padding-top: 26px;
  width: 120px;
}
.lights button {
  width: 24px;
  height: 24px;
  border-radius: 50%;
}
.red { background: #ee6a5f; box-shadow: inset 0 0 0 1px #d65a4e; }
.amber { background: #f5bf4f; box-shadow: inset 0 0 0 1px #d9a441; }
.green { background: #61c554; box-shadow: inset 0 0 0 1px #4ca93f; }
.tabs {
  flex: 1;
  display: flex;
  padding-top: 16px;
}
.tab {
  display: grid;
  width: 484px;
  margin-right: -28px;
  color: #cfcfcf;
}
.tab.active { color: #f1f1f1; z-index: 1; }
.shape, .tab-body { grid-area: 1 / 1; }
.shape { width: 484px; height: 58px; }
.tab-body {
  height: 58px;
  padding: 1px 34px 0 38px;
  display: flex;
  align-items: center;
  gap: 19px;
  color: #4f4f4f;
}
.doc { width: 20px; height: 28px; }
.tab-title {
  flex: 1;
  color: #000;
  font-size: 24px;
}
.x { width: 14px; height: 14px; }
.newtab {
  margin: 16px 0 0 22px;
  align-self: flex-start;
}
.profile {
  margin-top: 4px;
  height: 72px;
  font-size: 23px;
}

/* Toolbar */
.toolbar {
  flex: none;
  height: 72px;
  padding: 0 32px 0 22px;
  display: flex;
  align-items: center;
  gap: 28px;
  background: #f1f1f1;
}
.omnibox {
  flex: 1;
  height: 54px;
  margin-left: -6px;
  padding: 0 12px;
  display: flex;
  align-items: center;
  border: 2px solid #b5b5b5;
  border-radius: 6px;
  background: #fff;
  font-size: 27px;
}
.omnibox label { margin-left: 13px; color: #808080; }
.omnibox input {
  flex: 1;
  min-width: 0;
  padding: 0;
  border: 0;
  background: none;
  color: #000;
  font: inherit;
}
.extensions {
  display: flex;
  gap: 16px;
  margin-left: -12px;
}
.extensions svg { width: 40px; height: 40px; overflow: visible; }
.more { margin-left: 4px; }

/* Bookmarks bar */
.bookmarks {
  flex: none;
  height: 48px;
  padding: 0 21px 8px 24px;
  display: flex;
  align-items: center;
  gap: 27px;
  border-bottom: 2px solid #b5b5b5;
  background: #f1f1f1;
  font-size: 24px;
  white-space: nowrap;
}
.bookmarks a {
  display: flex;
  align-items: center;
  gap: 8px;
  color: #000;
  text-decoration: none;
}
.bookmarks a svg { width: 32px; height: 32px; color: #6a6a6a; }
.bookmarks .clipped { width: 281px; }
.overflow { margin-left: auto; color: #6a6a6a; }

/* Page */
.viewport {
  flex: 1;
  min-height: 0;
  overflow: hidden;
  color: #212529;
  font-size: 31px;
  line-height: 48px;
}
.container {
  max-width: 2280px;
  margin: 0 auto;
  padding: 0 30px;
}
.card { border: 2px solid; }
.row { display: grid; grid-template-columns: repeat(3, 1fr); }
.current {
  width: calc((100% + 60px) * 7 / 12 - 60px);
  padding: 0 40px 40px;
  border-color: #459fbb;
  border-top: 0;
  border-radius: 0 0 8px 8px;
  text-align: center;
}
h1 {
  margin-bottom: 32px;
  font-size: 73px;
  font-weight: 500;
  line-height: 64px;
}
h4 {
  margin-bottom: 38px;
  font-size: 40px;
  font-weight: 700;
}
.current .row, .days .row { padding: 17px 0 47px; }
.current dd { color: #51a351; }
.forecast {
  width: calc((100% + 60px) * 10 / 12 - 60px);
  border-color: #51a351;
  border-radius: 8px;
}
h2 {
  padding: 25px 40px 23px;
  border-bottom: 2px solid #c3e3ca;
  border-radius: 6px 6px 0 0;
  background: #d8eadb;
  color: #285a2c;
  font-size: 31px;
  font-weight: 400;
}
.days { padding: 40px; }
.days dl, .days figure { padding: 0 30px; }
.days dd, figcaption { color: #343a40; }
figure svg { width: 100px; height: 100px; }

/* Dock */
.dock {
  flex: none;
  align-self: center;
  z-index: 1;
  height: 160px;
  padding: 0 8px;
  display: flex;
  border-radius: 12px 12px 0 0;
  background:
    radial-gradient(ellipse 260px 110px at 35% 0, rgba(150, 158, 105, .8), rgba(150, 158, 105, 0)),
    radial-gradient(ellipse 420px 130px at 56% 0, rgba(150, 160, 100, .9), rgba(150, 160, 100, 0)),
    radial-gradient(ellipse 420px 200px at 49% 100%, rgba(155, 188, 145, 1), rgba(155, 188, 145, 0)),
    linear-gradient(#4f9ac1, #50b1e1);
  box-shadow: 0 0 3px rgba(0, 0, 0, .35), 0 0 90px rgba(0, 0, 0, .22);
}
.dock button {
  width: 136px;
  display: flex;
  flex-direction: column;
  align-items: center;
}
.dock svg {
  width: 136px;
  height: 144px;
  filter: drop-shadow(0 2px 2px rgba(0, 0, 0, .3));
}
.running::after {
  content: "";
  width: 8px;
  height: 8px;
  margin-top: 4px;
  border-radius: 50%;
  background: #053a66;
}
.dock hr {
  width: 2px;
  height: 120px;
  margin: 20px 28px 0 30px;
  border: 0;
  background: #2f7fa6;
}
```
